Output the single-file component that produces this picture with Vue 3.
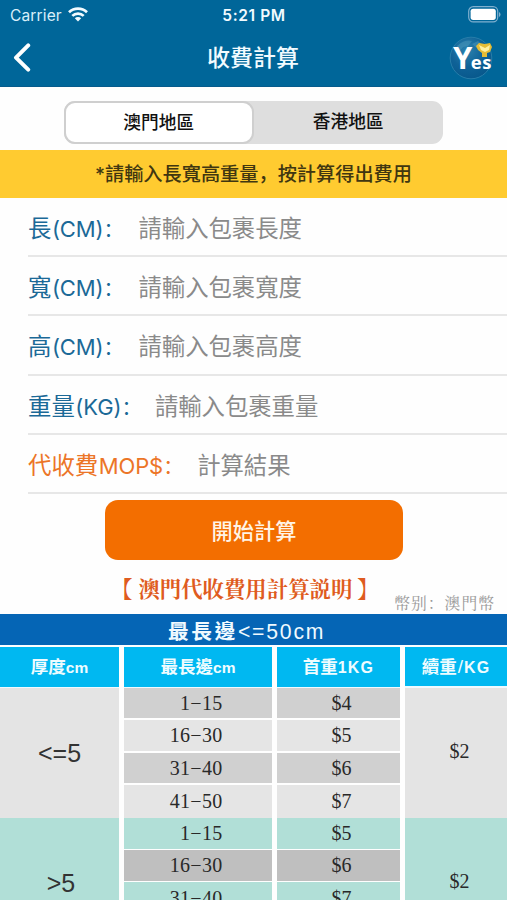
<script setup>
const fields = [
  { key: 'length', name: '長', unit: '(CM)', hint: '請輸入包裹長度' },
  { key: 'width', name: '寬', unit: '(CM)', hint: '請輸入包裹寬度' },
  { key: 'height', name: '高', unit: '(CM)', hint: '請輸入包裹高度' },
  { key: 'weight', name: '重量', unit: '(KG)', hint: '請輸入包裹重量' },
  { key: 'result', name: '代收費', unit: 'MOP$', hint: '計算結果' },
]
const thin = [
  { range: '1−15', price: '$4' },
  { range: '16−30', price: '$5' },
  { range: '31−40', price: '$6' },
  { range: '41−50', price: '$7' },
]
const thick = [
  { range: '1−15', price: '$5' },
  { range: '16−30', price: '$6' },
  { range: '31−40', price: '$7' },
]
</script>

<template>
  <div class="screen">
    <header class="top">
      <div class="status">
        <div class="carrier">
          <span>Carrier</span>
          <svg width="20" height="15" viewBox="0 0 20 15">
            <g fill="none" stroke="#f2fbff" stroke-width="2.7">
              <path d="M1 5.3a13 13 0 0 1 18 0" />
              <path d="M4.3 8.9a8.2 8.2 0 0 1 11.4 0" />
            </g>
            <path d="M10 14.6 6.8 11.3a4.6 4.6 0 0 1 6.4 0z" fill="#f2fbff" />
          </svg>
        </div>
        <span class="clock">5:21 PM</span>
        <svg class="battery" width="33" height="17" viewBox="0 0 33 17">
          <rect x=".7" y=".7" width="29" height="15.2" rx="4.6" fill="none" stroke="#7fb0cf" stroke-width="1.2" />
          <rect x="2.6" y="2.7" width="25.2" height="11.2" rx="2.6" fill="#fff" />
          <path d="M31 6v5q1.5-.7 1.5-2.5T31 6z" fill="#7fb0cf" />
        </svg>
      </div>
      <nav class="nav">
        <svg class="back" width="18" height="30" viewBox="0 0 18 30">
          <path d="M15.2 2.4 3 14.6 15.2 26.6" fill="none" stroke="#fff" stroke-width="4" stroke-linecap="round" stroke-linejoin="round" />
        </svg>
        <h1>收費計算</h1>
        <svg class="logo" width="46" height="46" viewBox="0 0 46 46">
          <defs>
            <radialGradient id="globe" cx=".4" cy=".3" r=".75">
              <stop offset="0" stop-color="#2c82ae" />
              <stop offset=".55" stop-color="#0f6297" />
              <stop offset="1" stop-color="#07578b" />
            </radialGradient>
          </defs>
          <circle cx="23" cy="23" r="20.8" fill="url(#globe)" stroke="#277da9" stroke-width="1" />
          <path d="M9 11q8-7 15-5l-4 5-5 1-4 5zM24 9l6-3 6 5-5 4z" fill="#4e9abc" opacity=".5" />
          <text x="5" y="34" class="logo-text"><tspan class="logo-y">Y</tspan><tspan class="logo-es">es</tspan></text>
          <path d="M28 11l3-3 6 1 5-1 2 4-2 5-3 1v4h-5v-4l-4-3z" fill="#e5bc35" />
          <path d="M31 10l6 3 5-3-1 5-4 2-4-2z" fill="#fff0a0" />
        </svg>
      </nav>
    </header>

    <div class="region">
      <button class="seg active">澳門地區</button>
      <button class="seg">香港地區</button>
    </div>

    <p class="notice">*請輸入長寬高重量，按計算得出費用</p>

    <form class="fields" @submit.prevent>
      <div v-for="f in fields" :key="f.key" class="field" :class="f.key">
        <label>{{ f.name }}<span class="unit">{{ f.unit }}</span><span class="colon">：</span></label>
        <span class="hint">{{ f.hint }}</span>
      </div>
    </form>

    <button class="submit">開始計算</button>

    <div class="caption">
      <h2>【<span>澳門代收費用計算説明</span>】</h2>
      <span class="currency">幣别：澳門幣</span>
    </div>

    <div class="banner">最長邊<span>&lt;=50cm</span></div>
    <section class="rates">
      <div class="head c1">厚度<b>cm</b></div>
      <div class="head c2">最長邊<b>cm</b></div>
      <div class="head c3">首重<b class="kg">1KG</b></div>
      <div class="head c4">續重<b class="slash">/</b><b class="kg">KG</b></div>
      <div class="thick-cell gray">&lt;=5</div>
      <div class="rows gray">
        <template v-for="r in thin" :key="r.range">
          <div class="range">{{ r.range }}</div>
          <div class="price">{{ r.price }}</div>
        </template>
      </div>
      <div class="extra gray">$2</div>
      <div class="thick-cell green">&gt;5</div>
      <div class="rows green">
        <template v-for="r in thick" :key="r.range">
          <div class="range">{{ r.range }}</div>
          <div class="price">{{ r.price }}</div>
        </template>
      </div>
      <div class="extra green">$2</div>
    </section>
  </div>
</template>

<style>
html, body { margin: 0; overflow: hidden; }
</style>

<style scoped>
* { box-sizing: border-box; }
.screen {
  width: 507px;
  height: 900px;
  overflow: hidden;
  display: flex;
  flex-direction: column;
  background: #fefefe;
  font-family: Inter, "Noto Sans CJK SC", sans-serif;
  white-space: nowrap;
}
h1, h2, p { margin: 0; }
button { border: 0; padding: 0; font-family: inherit; }
.top { height: 87px; flex: none; background: #006699; color: #f2fbff; border-bottom: 1px solid #075b8c; }
.status {
  height: 30px;
  display: grid;
  grid-template-columns: 1fr auto 1fr;
  align-items: center;
  padding: 0 6px 0 10px;
}
.carrier { display: flex; align-items: center; gap: 6px; font-size: 15.5px; letter-spacing: .15px; color: #d8effa; }
.carrier svg { margin-top: -1px; }
.clock { font-size: 15.5px; font-weight: 600; letter-spacing: .6px; margin-left: -3px; }
.battery { justify-self: end; margin-top: -2px; }
.nav {
  height: 56px;
  display: grid;
  grid-template-columns: 1fr auto 1fr;
  align-items: center;
  padding: 0 13px 0 13px;
}
.nav h1 { font-size: 23px; font-weight: 500; line-height: 30px; padding-bottom: 1px; margin-left: -1px; }
.logo { justify-self: end; }
.logo-text { font-family: "Open Sans", sans-serif; font-weight: 700; fill: #fff; }
.logo-y { font-size: 31px; letter-spacing: -1.5px; }
.logo-es { font-size: 18.5px; letter-spacing: .5px; }
.region {
  flex: none;
  width: 379px;
  height: 43px;
  margin: 14px 0 6px 64px;
  border-radius: 11px;
  background: #dedede;
  display: grid;
  grid-template-columns: 1fr 1fr;
}
.seg { font-size: 17.7px; font-weight: 500; color: #111; background: none; border-radius: 11px; line-height: 38px; padding-bottom: 1px; }
.seg.active { background: #fff; border: 2px solid #cfcfcf; padding: 0; line-height: 37px; }
.notice {
  flex: none;
  height: 47.5px;
  line-height: 49px;
  background: #ffcb30;
  color: #403610;
  text-align: center;
  font-size: 19.2px;
  font-weight: 500;
}
.fields { flex: none; }
.field {
  height: 59.35px;
  margin-left: 28px;
  border-bottom: 2px solid #e7e7e7;
  display: flex;
  align-items: center;
  padding-top: 1px;
  font-size: 23.4px;
  color: #1b6997;
}
.unit { font-size: 22px; letter-spacing: -.1px; margin-left: .5px; }
.colon { font-size: 20px; }
.hint { margin-left: 15px; color: #8a8a8a; letter-spacing: -.05px; }
.weight .hint { margin-left: 13.5px; }
.result .hint { margin-left: 14px; }
.field.result label { color: #ec7527; }
.submit {
  flex: none;
  width: 298px;
  height: 60px;
  margin: 5.5px 0 0 105px;
  border-radius: 13px;
  background: #f36e00;
  color: #fff4e6;
  font-size: 21.2px;
  font-weight: 500;
}
.caption { flex: none; height: 54.5px; position: relative; }
.caption h2 {
  padding: 12px 0 0 111px;
  font: bold 21.4px/32px "Noto Serif CJK TC", "Noto Sans CJK TC", serif;
  color: #df5b20;
}
.caption h2 span { margin: 0 5px 0 6px; }
.currency {
  position: absolute;
  right: 12px;
  top: 32px;
  font: 15.8px/22px "Noto Serif CJK SC", "Noto Sans CJK SC", serif;
  letter-spacing: 1px;
  color: #999;
}
.banner {
  flex: none;
  height: 31px;
  line-height: 35px;
  padding-left: 168px;
  background: #0565b5;
  color: #f0faff;
  font-family: "Liberation Sans", "Noto Sans CJK TC", sans-serif;
  font-size: 20.7px;
  font-weight: 600;
  letter-spacing: 2.6px;
}
.banner span { font-weight: 400; font-size: 21.2px; letter-spacing: 1.8px; }
.rates {
  flex: none;
  margin-top: 2px;
  display: grid;
  grid-template-columns: 119px 148px 123px 102px;
  grid-template-rows: 41px 130px 130px;
  column-gap: 5px;
}
.head {
  background: #00b8f1;
  color: #effcff;
  text-align: center;
  font: bold 17.5px/40px "Liberation Sans", "Noto Sans CJK TC", sans-serif;
  border-bottom: 1px solid #effaff;
}
.head b { font-size: 15.5px; }
.head .kg { font-size: 16px; letter-spacing: 1.2px; }
.head .slash { font-size: 19px; font-weight: 400; padding: 0 1px; }
.head.c4 { line-height: 39px; border-bottom-width: 2px; }
.thick-cell {
  display: flex;
  justify-content: center;
  align-items: center;
  font: 25px "Liberation Sans", sans-serif;
  color: #333;
}
.thick-cell.green { padding-left: 3px; }
.gray.thick-cell, .gray.extra { background: #e4e4e4; }
.green.thick-cell, .green.extra { background: #b1dfd7; }
.rows {
  grid-column: 2 / 4;
  display: grid;
  grid-template-columns: 148px 123px;
  grid-template-rows: 30px 31px 30px 33px;
  gap: 2px 5px;
  font: 20px "Liberation Serif", serif;
  color: #292929;
}
.rows.green { grid-template-rows: 31px 31px 32px; gap: 1px 5px; }
.range { display: flex; align-items: center; justify-content: flex-end; padding-right: 49.5px; letter-spacing: .3px; }
.price { display: flex; align-items: center; justify-content: center; padding-left: 6px; }
.gray .range, .gray .price { background: #e5e5e5; }
.gray > :nth-child(4n + 1), .gray > :nth-child(4n + 2) { background: #d0d0d0; }
.gray > :nth-child(n + 7) { padding-bottom: 1px; }
.green .range, .green .price { background: #b1dfd7; }
.green > :nth-child(3), .green > :nth-child(4) { background: #bfbfbf; }
.extra { display: flex; align-items: center; justify-content: center; padding: 0 0 4px 7px; font: 20px "Liberation Serif", serif; color: #292929; }
</style>
